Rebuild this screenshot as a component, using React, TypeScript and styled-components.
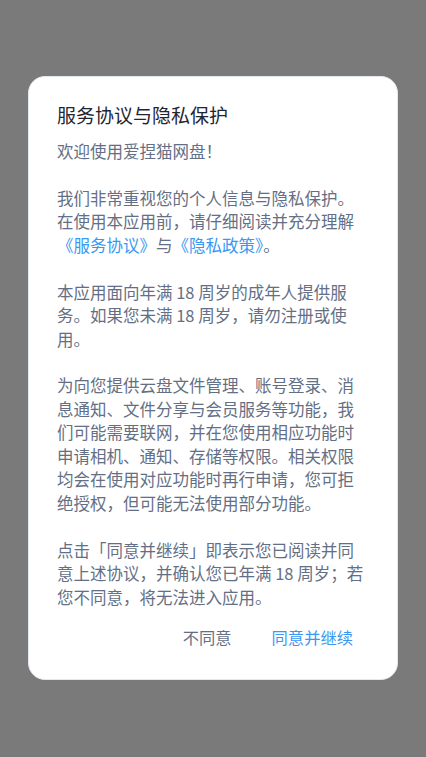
import React from "react";
import styled, { createGlobalStyle } from "styled-components";

const Global = createGlobalStyle`
  html, body { margin: 0; padding: 0; }
  body {
    background: #7a7a7a;
    font-family: "Noto Sans CJK SC", "Noto Sans", sans-serif;
  }
`;

const Overlay = styled.div`
  width: 426px;
  height: 757px;
  background: #7a7a7a;
  display: flex;
  justify-content: center;
  align-items: flex-start;
  padding-top: 76px;
  box-sizing: border-box;
`;

const Card = styled.div`
  width: 370px;
  height: 604px;
  box-sizing: border-box;
  background: #ffffff;
  border-radius: 17px;
  border: 1px solid #e3e7ef;
  padding: 25px 28px 22px 28px;
  display: flex;
  flex-direction: column;
`;

const Title = styled.h1`
  margin: 0;
  font-size: 19px;
  line-height: 26px;
  font-weight: 400;
  color: #1f2533;
`;

const Body = styled.div`
  margin-top: 12px;
  font-size: 16.5px;
  line-height: 23.45px;
  color: #646f85;
  display: flex;
  flex-direction: column;
  gap: 23.45px;
  white-space: nowrap;
`;

const Para = styled.p`
  margin: 0;
`;

const Link = styled.span`
  color: #3a98f2;
`;

const Actions = styled.div`
  margin-top: 8px;
  display: flex;
  justify-content: flex-end;
  gap: 8px;
`;

const Button = styled.button<{ $primary?: boolean }>`
  border: none;
  background: transparent;
  font-family: inherit;
  font-size: 16.3px;
  line-height: 40px;
  height: 40px;
  padding: 0 16px;
  color: ${(p) => (p.$primary ? "#3a98f2" : "#646f85")};
  cursor: pointer;
`;

export default function App() {
  return (
    <>
      <Global />
      <Overlay>
        <Card>
          <Title>服务协议与隐私保护</Title>
          <Body>
            <Para>欢迎使用爱捏猫网盘！</Para>
            <Para>
              我们非常重视您的个人信息与隐私保护。
              <br />
              在使用本应用前，请仔细阅读并充分理解
              <br />
              <Link>《服务协议》</Link>与<Link>《隐私政策》</Link>。
            </Para>
            <Para>
              本应用面向年满 18 周岁的成年人提供服
              <br />
              务。如果您未满 18 周岁，请勿注册或使
              <br />
              用。
            </Para>
            <Para>
              为向您提供云盘文件管理、账号登录、消
              <br />
              息通知、文件分享与会员服务等功能，我
              <br />
              们可能需要联网，并在您使用相应功能时
              <br />
              申请相机、通知、存储等权限。相关权限
              <br />
              均会在使用对应功能时再行申请，您可拒
              <br />
              绝授权，但可能无法使用部分功能。
            </Para>
            <Para>
              点击「同意并继续」即表示您已阅读并同
              <br />
              意上述协议，并确认您已年满 18 周岁；若
              <br />
              您不同意，将无法进入应用。
            </Para>
          </Body>
          <Actions>
            <Button>不同意</Button>
            <Button $primary>同意并继续</Button>
          </Actions>
        </Card>
      </Overlay>
    </>
  );
}
